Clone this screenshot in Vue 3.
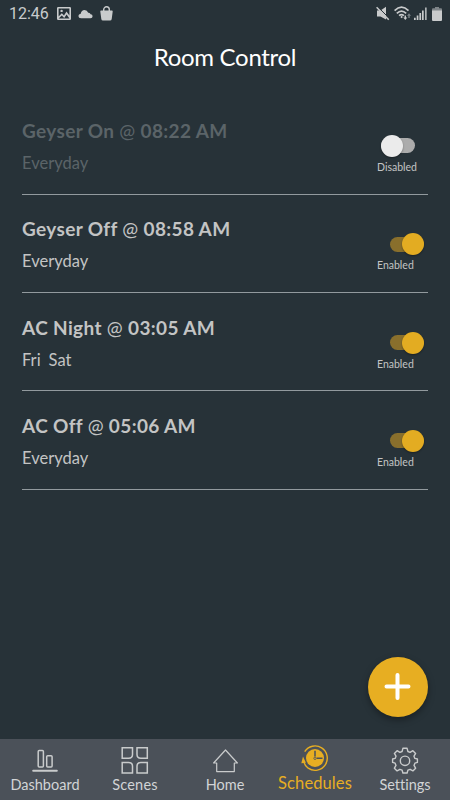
<script setup>
import { ref } from 'vue'

const schedules = ref([
  { id: 1, title: 'Geyser On', time: '08:22 AM', days: ['Everyday'], enabled: false },
  { id: 2, title: 'Geyser Off', time: '08:58 AM', days: ['Everyday'], enabled: true },
  { id: 3, title: 'AC Night', time: '03:05 AM', days: ['Fri', 'Sat'], enabled: true },
  { id: 4, title: 'AC Off', time: '05:06 AM', days: ['Everyday'], enabled: true },
])
</script>

<template>
  <div class="screen">
    <header class="status">
      <span class="clock">12:46</span>
      <svg class="ic-image" width="14" height="13" viewBox="0 0 14 13">
        <path fill="#c9cbcc" fill-rule="evenodd" d="M1.2 0h11.6Q14 0 14 1.200V11.800Q14 13 12.800 13H1.200Q0 13 0 11.800V1.200Q0 0 1.200 0ZM1.600 1.600V9.500L4.800 6.200L7 8.500L9.500 4.500L12.400 8.500V1.600ZM1.600 11.400H12.400L9.600 7.500L7.200 11L4.800 8.600Z" />
        <circle cx="4.600" cy="3.900" r="1.200" fill="#c9cbcc" />
      </svg>
      <svg class="ic-cloud" width="15" height="10" viewBox="0 0 15 10">
        <path fill="#c9cbcc" d="M3 9.200Q.5 9.200.4 7Q.5 5 2.700 4.700Q3.500 1 6.500 1Q9.300 1 10.200 3.700Q12 3.300 12.600 5.200Q14.600 5.400 14.600 7.300Q14.500 9.200 12.500 9.200Z" />
      </svg>
      <svg class="ic-bag" width="13" height="15" viewBox="0 0 13 15">
        <path fill="none" stroke="#c9cbcc" stroke-width="1.400" d="M3.700 5V3.600a2.800 2.800 0 0 1 5.600 0V5" />
        <path fill="#c9cbcc" d="M1.200 4.500H11.800Q12.900 4.500 12.700 5.600L11.700 13Q11.500 14.500 10 14.500H3Q1.500 14.500 1.300 13L.3 5.600Q.1 4.500 1.200 4.500Z" />
      </svg>
      <span class="spacer"></span>
      <svg class="ic-mute" width="14" height="15" viewBox="0 0 14 15">
        <path fill="#c9cbcc" d="M1 4.500H4.500L10 .8V13.500L4.500 10.500H1Z" />
        <path stroke="#273238" stroke-width="1" d="M1.800.8L14 13" />
        <path stroke="#c9cbcc" stroke-width="1.500" d="M.6 1.300L12.800 13.800" />
      </svg>
      <svg class="ic-wifi" width="18" height="15" viewBox="0 0 18 15">
        <g fill="none" stroke="#c9cbcc" stroke-width="1.700">
          <path d="M.6 4.600Q7.500-2.200 14.500 4.600M2.800 7.300Q7.500 2.800 12.200 7.300M5.100 9.700Q7.500 7.600 9.900 9.700" />
        </g>
        <path fill="#c9cbcc" d="M6.300 11L7.600 9.800L9 11L7.600 12.300ZM10.600 9.500H12V11.500H13.300L11.300 14L9.300 11.500H10.600Z" />
        <path fill="#7b8387" d="M14.300 12V9.700H13L15 7.200L17 9.700H15.700V12Z" />
      </svg>
      <svg class="ic-signal" width="13" height="13" viewBox="0 0 13 13">
        <path fill="#c9cbcc" d="M0 10.800H1.700V13H0ZM2.700 8.500H4.400V13H2.700ZM5.400 6H7.100V13H5.400ZM8 3.500H9.700V13H8Z" />
        <path fill="#aeb2b4" d="M11 .5H12.700V13H11Z" />
      </svg>
      <svg class="ic-battery" width="10" height="14" viewBox="0 0 10 14">
        <path fill="#7e8488" d="M3 0H7V1.200H9Q10 1.200 10 2.200V4H0V2.200Q0 1.200 1 1.200H3Z" />
        <path fill="#c9cbcc" d="M0 3.500H10V13Q10 14 9 14H1Q0 14 0 13Z" />
      </svg>
    </header>

    <h1 class="title">Room Control</h1>

    <main class="list">
      <section v-for="s in schedules" :key="s.id" class="row" :class="{ off: !s.enabled }">
        <div class="info">
          <h2 class="name">{{ s.title }} <span class="at">@</span> {{ s.time }}</h2>
          <p class="days"><span v-for="d in s.days" :key="d">{{ d }}</span></p>
        </div>
        <div class="control">
          <button class="switch" :aria-pressed="s.enabled" @click="s.enabled = !s.enabled">
            <span class="track"><span class="thumb"></span></span>
          </button>
          <span class="state">{{ s.enabled ? 'Enabled' : 'Disabled' }}</span>
        </div>
      </section>
    </main>

    <button class="fab">
      <svg width="60" height="60" viewBox="0 0 60 60">
        <path stroke="#fff" stroke-width="4" stroke-linecap="round" d="M29.500 18V41M18.500 29.500H40.500" />
      </svg>
    </button>

    <nav class="nav">
      <a class="tab dashboard">
        <svg width="30" height="30" viewBox="0 0 30 30" fill="none" stroke="#c9cbcc">
          <rect x="8.200" y="5.500" width="5.200" height="16.500" rx="1" stroke-width="1.500" />
          <rect x="16.700" y="10.800" width="5.400" height="11.200" rx="1" stroke-width="1.500" />
          <path stroke-width="2" stroke-linecap="round" d="M3.200 25.700H26.800" />
        </svg>
        <span>Dashboard</span>
      </a>
      <a class="tab scenes">
        <svg width="30" height="30" viewBox="0 0 30 30" fill="none" stroke="#c9cbcc" stroke-width="1.500">
          <path d="M2.200 2.700H12.500V9.500Q12.500 13.200 8.700 13.200H2.200ZM17 2.700H27.300V13.200H20.800Q17 13.200 17 9.500ZM2.200 17.500H8.700Q12.500 17.500 12.500 21.300V28H2.200ZM20.800 17.500H27.300V28H17V21.300Q17 17.500 20.800 17.500Z" />
        </svg>
        <span>Scenes</span>
      </a>
      <a class="tab home">
        <svg width="30" height="30" viewBox="0 0 30 30" fill="none" stroke="#c9cbcc" stroke-width="1.200" stroke-linejoin="round">
          <path d="M15.500 5L27.400 18H24.300V26.600H6.700V18H3.600Z" />
        </svg>
        <span>Home</span>
      </a>
      <a class="tab schedules">
        <svg width="30" height="30" viewBox="0 0 30 30" fill="none">
          <circle cx="15" cy="15" r="9" fill="#e7ae22" />
          <path stroke="#e7ae22" stroke-width="1.400" d="M4.700 8.700A12.200 12.200 0 1 1 8.200 25.200Q4.600 22.600 3.500 18" />
          <path fill="#e7ae22" d="M3 13.500L5.900 19.700L1.300 20.200Z" />
          <path stroke="#4b5159" stroke-width="1.500" d="M15 7.800V13.600M16.700 15.300H22.500" />
          <circle cx="15" cy="15.300" r="1.200" stroke="#4b5159" stroke-width=".8" />
        </svg>
        <span>Schedules</span>
      </a>
      <a class="tab settings">
        <svg width="30" height="30" viewBox="0 0 30 30" fill="none" stroke="#c9cbcc" stroke-width="1.400" stroke-linejoin="round">
          <path d="M12.900 3.300H17.100L17.900 6.500L20.100 7.400L22.900 5.700L25.600 8.400L24 11.200L24.900 13.400L27.400 14V17.400L24.900 18.200L24 20.400L25.600 23.200L22.900 25.900L20.100 24.300L17.900 25.200L17.100 28H12.900L12.100 25.200L9.900 24.300L7.100 25.900L4.400 23.200L6 20.400L5.100 18.200L2.600 17.400V14L5.100 13.400L6 11.200L4.400 8.400L7.100 5.700L9.900 7.400L12.100 6.500Z" />
          <circle cx="15" cy="15.800" r="4.700" />
        </svg>
        <span>Settings</span>
      </a>
    </nav>
  </div>
</template>

<style>
body {
  margin: 0;
  background: #273238;
}
</style>

<style scoped>
.screen {
  position: relative;
  display: flex;
  flex-direction: column;
  width: 450px;
  height: 800px;
  overflow: hidden;
  background: #273238;
  color: #c3c4c4;
  font-family: Lato, "Open Sans", sans-serif;
  font-variant-ligatures: none;
}

svg {
  display: block;
}

button {
  padding: 0;
  border: 0;
  background: none;
}

.status {
  display: flex;
  align-items: center;
  box-sizing: border-box;
  height: 27px;
  padding: 0 8px 0 9px;
  flex: none;
}

.clock {
  width: 48px;
  color: #c9cbcc;
  font: 16px/28px Roboto, sans-serif;
  white-space: nowrap;
}

.ic-cloud {
  margin-left: 7px;
}

.ic-bag {
  margin-left: 7px;
}

.spacer {
  flex: 1;
}

.ic-wifi {
  margin-left: 4px;
}

.ic-signal {
  margin-left: 2px;
}

.ic-battery {
  margin-left: 5px;
}

.title {
  flex: none;
  margin: 15px 0 0;
  color: #fff;
  font-size: 24px;
  font-weight: 400;
  letter-spacing: -0.300px;
  line-height: 30px;
  text-align: center;
}

.list {
  flex: 1;
  padding: 24.400px 22px 0;
}

.row {
  display: flex;
  justify-content: space-between;
  box-sizing: border-box;
  height: 98.330px;
  border-bottom: 1px solid #929a9e;
}

.info {
  padding-top: 21.600px;
}

.name {
  margin: 0;
  font-size: 19px;
  font-weight: 700;
  letter-spacing: 0.360px;
  line-height: 26px;
  white-space: nowrap;
}

.at {
  font-weight: 400;
}

.days {
  display: flex;
  gap: 8px;
  margin: 8px 0 0;
  font-size: 16.500px;
  line-height: 22px;
}

.off .info {
  color: #5b6468;
}

.control {
  display: flex;
  flex-direction: column;
  width: 51px;
  padding-top: 38.500px;
}

.switch {
  display: flex;
  width: 34px;
  height: 22px;
  margin-left: 13px;
  align-items: center;
}

.track {
  display: flex;
  align-items: center;
  justify-content: flex-end;
  width: 34px;
  height: 15px;
  flex: none;
  border-radius: 8px;
  background: #896f2c;
}

.thumb {
  width: 22px;
  height: 22px;
  flex: none;
  border-radius: 50%;
  background: #e3ac22;
  box-shadow: 0 1px 2px rgba(0, 0, 0, 0.35);
}

.off .switch {
  margin-left: 4px;
}

.off .track {
  justify-content: flex-start;
  background: #acacac;
}

.off .thumb {
  background: #ebebeb;
}

.state {
  margin-top: 3px;
  font-size: 10.500px;
  line-height: 14px;
}

.fab {
  position: absolute;
  left: 368px;
  top: 656.500px;
  width: 60px;
  height: 60px;
  border-radius: 50%;
  background: #e7ae22;
  box-shadow: 0 3px 7px rgba(0, 0, 0, 0.35);
}

.nav {
  display: grid;
  grid-template-columns: repeat(5, 90px);
  flex: none;
  height: 61px;
  background: #4b5159;
}

.tab {
  display: flex;
  flex-direction: column;
  align-items: center;
  padding-top: 6px;
  color: #d2d4d6;
  font-size: 14.500px;
  line-height: 19px;
}

.scenes {
  letter-spacing: 0.200px;
}

.schedules {
  padding-top: 4px;
  color: #e7ae22;
  font-size: 16.500px;
  letter-spacing: 0.100px;
}

.schedules span {
  margin-top: 1px;
}
</style>
